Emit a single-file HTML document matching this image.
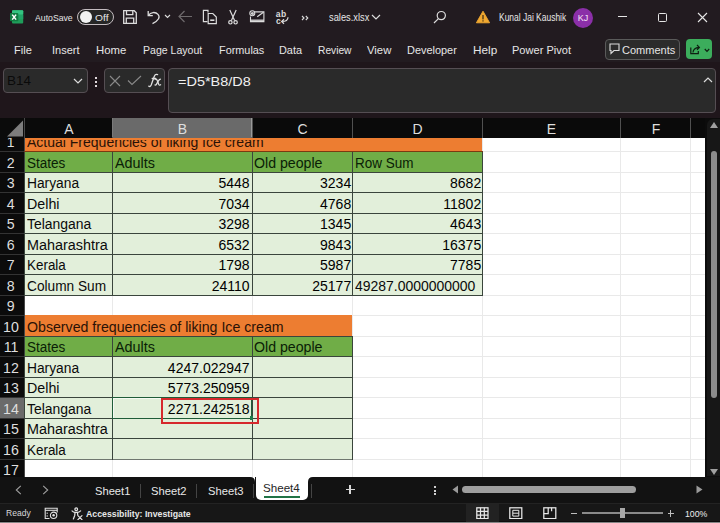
<!DOCTYPE html><html><head><meta charset="utf-8"><style>
html,body{margin:0;padding:0;}
body{width:720px;height:523px;overflow:hidden;background:#221b20;position:relative;font-family:"Liberation Sans", sans-serif;}
body div, body svg{position:absolute;}
.t{white-space:pre;line-height:1;}
</style></head><body>
<div style="left:0px;top:118px;width:705px;height:359px;background:#ffffff;"></div>
<div style="left:0px;top:118px;width:705px;height:20px;background:#0a0a0a;"></div>
<div style="left:0px;top:118px;width:24px;height:359px;background:#0b0b0b;"></div>
<div style="left:24px;top:118px;width:1px;height:359px;background:#484848;"></div>
<div style="left:112px;top:118px;width:140px;height:20px;background:#6a6a6a;"></div>
<div style="left:0px;top:397px;width:24px;height:21px;background:#6a6a6a;"></div>
<div style="left:112px;top:118px;width:1px;height:20px;background:#505050;"></div>
<div style="left:252px;top:118px;width:1px;height:20px;background:#505050;"></div>
<div style="left:352px;top:118px;width:1px;height:20px;background:#505050;"></div>
<div style="left:482px;top:118px;width:1px;height:20px;background:#505050;"></div>
<div style="left:620px;top:118px;width:1px;height:20px;background:#505050;"></div>
<div style="left:690px;top:118px;width:1px;height:20px;background:#505050;"></div>
<div style="left:251px;top:118px;width:1px;height:19px;background:#9a9a9a;"></div>
<div style="left:112px;top:118px;width:1px;height:19px;background:#7a7a7a;"></div>
<div style="left:0px;top:151px;width:24px;height:1px;background:#333333;"></div>
<div style="left:0px;top:172px;width:24px;height:1px;background:#333333;"></div>
<div style="left:0px;top:192px;width:24px;height:1px;background:#333333;"></div>
<div style="left:0px;top:213px;width:24px;height:1px;background:#333333;"></div>
<div style="left:0px;top:233px;width:24px;height:1px;background:#333333;"></div>
<div style="left:0px;top:254px;width:24px;height:1px;background:#333333;"></div>
<div style="left:0px;top:274px;width:24px;height:1px;background:#333333;"></div>
<div style="left:0px;top:295px;width:24px;height:1px;background:#333333;"></div>
<div style="left:0px;top:315px;width:24px;height:1px;background:#333333;"></div>
<div style="left:0px;top:336px;width:24px;height:1px;background:#333333;"></div>
<div style="left:0px;top:356px;width:24px;height:1px;background:#333333;"></div>
<div style="left:0px;top:377px;width:24px;height:1px;background:#333333;"></div>
<div style="left:0px;top:397px;width:24px;height:1px;background:#333333;"></div>
<div style="left:0px;top:418px;width:24px;height:1px;background:#333333;"></div>
<div style="left:0px;top:438px;width:24px;height:1px;background:#333333;"></div>
<div style="left:0px;top:459px;width:24px;height:1px;background:#333333;"></div>
<svg style="left:7px;top:120px" width="17" height="17"><polygon points="16,0.5 16,16.5 0,16.5" fill="#7d7d7d"/></svg>
<div style="left:25px;top:151px;width:680px;height:1px;background:#e9e9e9;"></div>
<div style="left:25px;top:172px;width:680px;height:1px;background:#e9e9e9;"></div>
<div style="left:25px;top:192px;width:680px;height:1px;background:#e9e9e9;"></div>
<div style="left:25px;top:213px;width:680px;height:1px;background:#e9e9e9;"></div>
<div style="left:25px;top:233px;width:680px;height:1px;background:#e9e9e9;"></div>
<div style="left:25px;top:254px;width:680px;height:1px;background:#e9e9e9;"></div>
<div style="left:25px;top:274px;width:680px;height:1px;background:#e9e9e9;"></div>
<div style="left:25px;top:295px;width:680px;height:1px;background:#e9e9e9;"></div>
<div style="left:25px;top:315px;width:680px;height:1px;background:#e9e9e9;"></div>
<div style="left:25px;top:336px;width:680px;height:1px;background:#e9e9e9;"></div>
<div style="left:25px;top:356px;width:680px;height:1px;background:#e9e9e9;"></div>
<div style="left:25px;top:377px;width:680px;height:1px;background:#e9e9e9;"></div>
<div style="left:25px;top:397px;width:680px;height:1px;background:#e9e9e9;"></div>
<div style="left:25px;top:418px;width:680px;height:1px;background:#e9e9e9;"></div>
<div style="left:25px;top:438px;width:680px;height:1px;background:#e9e9e9;"></div>
<div style="left:25px;top:459px;width:680px;height:1px;background:#e9e9e9;"></div>
<div style="left:112px;top:138px;width:1px;height:339px;background:#e9e9e9;"></div>
<div style="left:252px;top:138px;width:1px;height:339px;background:#e9e9e9;"></div>
<div style="left:352px;top:138px;width:1px;height:339px;background:#e9e9e9;"></div>
<div style="left:482px;top:138px;width:1px;height:339px;background:#e9e9e9;"></div>
<div style="left:620px;top:138px;width:1px;height:339px;background:#e9e9e9;"></div>
<div style="left:690px;top:138px;width:1px;height:339px;background:#e9e9e9;"></div>
<div style="left:25px;top:138px;width:457px;height:13px;background:#ed7d31;"></div>
<div style="left:25px;top:151px;width:457px;height:21px;background:#70ad47;"></div>
<div style="left:25px;top:172px;width:457px;height:123px;background:#e2efda;"></div>
<div style="left:25px;top:315px;width:327px;height:21px;background:#ed7d31;"></div>
<div style="left:25px;top:336px;width:327px;height:20px;background:#70ad47;"></div>
<div style="left:25px;top:356px;width:327px;height:103px;background:#e2efda;"></div>
<div style="left:24px;top:151px;width:459px;height:1px;background:#3a453c;"></div>
<div style="left:24px;top:172px;width:459px;height:1px;background:#3a453c;"></div>
<div style="left:24px;top:192px;width:459px;height:1px;background:#3a453c;"></div>
<div style="left:24px;top:213px;width:459px;height:1px;background:#3a453c;"></div>
<div style="left:24px;top:233px;width:459px;height:1px;background:#3a453c;"></div>
<div style="left:24px;top:254px;width:459px;height:1px;background:#3a453c;"></div>
<div style="left:24px;top:274px;width:459px;height:1px;background:#3a453c;"></div>
<div style="left:24px;top:295px;width:459px;height:1px;background:#3a453c;"></div>
<div style="left:24px;top:151px;width:1px;height:145px;background:#3a453c;"></div>
<div style="left:112px;top:151px;width:1px;height:145px;background:#3a453c;"></div>
<div style="left:252px;top:151px;width:1px;height:145px;background:#3a453c;"></div>
<div style="left:352px;top:151px;width:1px;height:145px;background:#3a453c;"></div>
<div style="left:482px;top:151px;width:1px;height:145px;background:#3a453c;"></div>
<div style="left:24px;top:151px;width:459px;height:1px;background:#7a3a10;"></div>
<div style="left:24px;top:336px;width:329px;height:1px;background:#3a453c;"></div>
<div style="left:24px;top:356px;width:329px;height:1px;background:#3a453c;"></div>
<div style="left:24px;top:377px;width:329px;height:1px;background:#3a453c;"></div>
<div style="left:24px;top:397px;width:329px;height:1px;background:#3a453c;"></div>
<div style="left:24px;top:418px;width:329px;height:1px;background:#3a453c;"></div>
<div style="left:24px;top:438px;width:329px;height:1px;background:#3a453c;"></div>
<div style="left:24px;top:459px;width:329px;height:1px;background:#6f776f;"></div>
<div style="left:24px;top:336px;width:1px;height:124px;background:#3a453c;"></div>
<div style="left:112px;top:336px;width:1px;height:124px;background:#3a453c;"></div>
<div style="left:252px;top:336px;width:1px;height:124px;background:#3a453c;"></div>
<div style="left:352px;top:336px;width:1px;height:124px;background:#3a453c;"></div>
<div class="t" style="left:-31.0px;width:200px;text-align:center;top:122.05px;font-size:14px;color:#dedede;font-weight:400;">A</div>
<div class="t" style="left:82.5px;width:200px;text-align:center;top:122.05px;font-size:14px;color:#dedede;font-weight:400;">B</div>
<div class="t" style="left:202.5px;width:200px;text-align:center;top:122.05px;font-size:14px;color:#dedede;font-weight:400;">C</div>
<div class="t" style="left:317.5px;width:200px;text-align:center;top:122.05px;font-size:14px;color:#dedede;font-weight:400;">D</div>
<div class="t" style="left:451.5px;width:200px;text-align:center;top:122.05px;font-size:14px;color:#dedede;font-weight:400;">E</div>
<div class="t" style="left:556.0px;width:200px;text-align:center;top:122.05px;font-size:14px;color:#dedede;font-weight:400;">F</div>
<div class="t" style="left:-89.4px;width:200px;text-align:center;top:156.08px;font-size:14.2px;color:#dedede;font-weight:400;">2</div>
<div class="t" style="left:-89.4px;width:200px;text-align:center;top:176.08px;font-size:14.2px;color:#dedede;font-weight:400;">3</div>
<div class="t" style="left:-89.4px;width:200px;text-align:center;top:197.08px;font-size:14.2px;color:#dedede;font-weight:400;">4</div>
<div class="t" style="left:-89.4px;width:200px;text-align:center;top:217.08px;font-size:14.2px;color:#dedede;font-weight:400;">5</div>
<div class="t" style="left:-89.4px;width:200px;text-align:center;top:238.08px;font-size:14.2px;color:#dedede;font-weight:400;">6</div>
<div class="t" style="left:-89.4px;width:200px;text-align:center;top:258.08px;font-size:14.2px;color:#dedede;font-weight:400;">7</div>
<div class="t" style="left:-89.4px;width:200px;text-align:center;top:279.08px;font-size:14.2px;color:#dedede;font-weight:400;">8</div>
<div class="t" style="left:-89.4px;width:200px;text-align:center;top:299.08px;font-size:14.2px;color:#dedede;font-weight:400;">9</div>
<div class="t" style="left:-89px;width:200px;text-align:center;top:320.08px;font-size:14.2px;color:#dedede;font-weight:400;">10</div>
<div class="t" style="left:-89px;width:200px;text-align:center;top:340.08px;font-size:14.2px;color:#dedede;font-weight:400;">11</div>
<div class="t" style="left:-89px;width:200px;text-align:center;top:361.08px;font-size:14.2px;color:#dedede;font-weight:400;">12</div>
<div class="t" style="left:-89px;width:200px;text-align:center;top:381.08px;font-size:14.2px;color:#dedede;font-weight:400;">13</div>
<div class="t" style="left:-89px;width:200px;text-align:center;top:402.08px;font-size:14.2px;color:#dedede;font-weight:400;">14</div>
<div class="t" style="left:-89px;width:200px;text-align:center;top:422.08px;font-size:14.2px;color:#dedede;font-weight:400;">15</div>
<div class="t" style="left:-89px;width:200px;text-align:center;top:443.08px;font-size:14.2px;color:#dedede;font-weight:400;">16</div>
<div class="t" style="left:-89px;width:200px;text-align:center;top:463.08px;font-size:14.2px;color:#dedede;font-weight:400;">17</div>
<div style="left:0;top:138px;width:24px;height:13px;overflow:hidden;">
<div class="t" style="left:-89.4px;width:200px;text-align:center;top:-2.27px;font-size:13.9px;color:#dedede;font-weight:400;">1</div>
</div>
<div style="left:25px;top:140px;width:457px;height:11px;overflow:hidden;">
<div class="t" style="left:2.2px;top:-4.85px;font-size:14px;color:#2a1206;font-weight:400;transform:scaleX(1.0002);transform-origin:left 0;">Actual Frequencies of liking Ice cream</div>
</div>
<div class="t" style="left:27.0px;top:155.65px;font-size:14px;color:#0a2006;font-weight:400;transform:scaleX(0.9647);transform-origin:left 0;">States</div>
<div class="t" style="left:115.2px;top:155.65px;font-size:14px;color:#0a2006;font-weight:400;transform:scaleX(1.0251);transform-origin:left 0;">Adults</div>
<div class="t" style="left:253.7px;top:155.65px;font-size:14px;color:#0a2006;font-weight:400;transform:scaleX(1.0115);transform-origin:left 0;">Old people</div>
<div class="t" style="left:354.7px;top:155.65px;font-size:14px;color:#0a2006;font-weight:400;transform:scaleX(0.9640);transform-origin:left 0;">Row Sum</div>
<div class="t" style="left:27.0px;top:175.65px;font-size:14px;color:#0a0a0a;font-weight:400;transform:scaleX(0.9845);transform-origin:left 0;">Haryana</div>
<div class="t" style="right:470.4px;top:175.65px;font-size:14px;color:#000;font-weight:400;">5448</div>
<div class="t" style="right:368.8px;top:175.65px;font-size:14px;color:#000;font-weight:400;">3234</div>
<div class="t" style="right:238.8px;top:175.65px;font-size:14px;color:#000;font-weight:400;">8682</div>
<div class="t" style="left:27.0px;top:196.65px;font-size:14px;color:#0a0a0a;font-weight:400;transform:scaleX(1.0186);transform-origin:left 0;">Delhi</div>
<div class="t" style="right:470.4px;top:196.65px;font-size:14px;color:#000;font-weight:400;">7034</div>
<div class="t" style="right:368.8px;top:196.65px;font-size:14px;color:#000;font-weight:400;">4768</div>
<div class="t" style="right:238.8px;top:196.65px;font-size:14px;color:#000;font-weight:400;">11802</div>
<div class="t" style="left:27.0px;top:216.65px;font-size:14px;color:#0a0a0a;font-weight:400;transform:scaleX(0.9950);transform-origin:left 0;">Telangana</div>
<div class="t" style="right:470.4px;top:216.65px;font-size:14px;color:#000;font-weight:400;">3298</div>
<div class="t" style="right:368.8px;top:216.65px;font-size:14px;color:#000;font-weight:400;">1345</div>
<div class="t" style="right:238.8px;top:216.65px;font-size:14px;color:#000;font-weight:400;">4643</div>
<div class="t" style="left:27.0px;top:237.65px;font-size:14px;color:#0a0a0a;font-weight:400;transform:scaleX(1.0281);transform-origin:left 0;">Maharashtra</div>
<div class="t" style="right:470.4px;top:237.65px;font-size:14px;color:#000;font-weight:400;">6532</div>
<div class="t" style="right:368.8px;top:237.65px;font-size:14px;color:#000;font-weight:400;">9843</div>
<div class="t" style="right:238.8px;top:237.65px;font-size:14px;color:#000;font-weight:400;">16375</div>
<div class="t" style="left:27.0px;top:257.65px;font-size:14px;color:#0a0a0a;font-weight:400;transform:scaleX(0.9588);transform-origin:left 0;">Kerala</div>
<div class="t" style="right:470.4px;top:257.65px;font-size:14px;color:#000;font-weight:400;">1798</div>
<div class="t" style="right:368.8px;top:257.65px;font-size:14px;color:#000;font-weight:400;">5987</div>
<div class="t" style="right:238.8px;top:257.65px;font-size:14px;color:#000;font-weight:400;">7785</div>
<div class="t" style="left:27.0px;top:278.65px;font-size:14px;color:#0a0a0a;font-weight:400;transform:scaleX(0.9775);transform-origin:left 0;">Column Sum</div>
<div class="t" style="right:470.4px;top:278.65px;font-size:14px;color:#000;font-weight:400;">24110</div>
<div class="t" style="right:368.8px;top:278.65px;font-size:14px;color:#000;font-weight:400;">25177</div>
<div class="t" style="left:355.09999999999997px;top:278.65px;font-size:14px;color:#0a0a0a;font-weight:400;transform:scaleX(0.9976);transform-origin:left 0;">49287.0000000000</div>
<div class="t" style="left:26.7px;top:319.65px;font-size:14px;color:#2a1206;font-weight:400;transform:scaleX(1.0115);transform-origin:left 0;">Observed frequencies of liking Ice cream</div>
<div class="t" style="left:27.0px;top:339.65px;font-size:14px;color:#0a2006;font-weight:400;transform:scaleX(0.9647);transform-origin:left 0;">States</div>
<div class="t" style="left:115.2px;top:339.65px;font-size:14px;color:#0a2006;font-weight:400;transform:scaleX(1.0251);transform-origin:left 0;">Adults</div>
<div class="t" style="left:253.7px;top:339.65px;font-size:14px;color:#0a2006;font-weight:400;transform:scaleX(1.0115);transform-origin:left 0;">Old people</div>
<div class="t" style="left:27.0px;top:360.65px;font-size:14px;color:#0a0a0a;font-weight:400;transform:scaleX(0.9845);transform-origin:left 0;">Haryana</div>
<div class="t" style="left:27.0px;top:380.65px;font-size:14px;color:#0a0a0a;font-weight:400;transform:scaleX(1.0186);transform-origin:left 0;">Delhi</div>
<div class="t" style="left:27.0px;top:401.65px;font-size:14px;color:#0a0a0a;font-weight:400;transform:scaleX(0.9950);transform-origin:left 0;">Telangana</div>
<div class="t" style="left:27.0px;top:421.65px;font-size:14px;color:#0a0a0a;font-weight:400;transform:scaleX(1.0281);transform-origin:left 0;">Maharashtra</div>
<div class="t" style="left:27.0px;top:442.65px;font-size:14px;color:#0a0a0a;font-weight:400;transform:scaleX(0.9588);transform-origin:left 0;">Kerala</div>
<div class="t" style="right:470.4px;top:360.65px;font-size:14px;color:#000;font-weight:400;">4247.022947</div>
<div class="t" style="right:470.4px;top:380.65px;font-size:14px;color:#000;font-weight:400;">5773.250959</div>
<div class="t" style="right:470.4px;top:401.65px;font-size:14px;color:#000;font-weight:400;">2271.242518</div>
<div style="left:112px;top:397px;width:140px;height:1px;background:#1f5c38;"></div>
<div style="left:112px;top:418px;width:140px;height:1px;background:#1f5c38;"></div>
<div style="left:112px;top:397px;width:1px;height:22px;background:#1f5c38;"></div>
<div style="left:251px;top:397px;width:1px;height:22px;background:#1f5c38;"></div>
<div style="left:113px;top:398px;width:138px;height:1px;background:#f4faf2;"></div>
<div style="left:113px;top:398px;width:1px;height:20px;background:#f4faf2;"></div>
<div style="left:249.5px;top:416px;width:3.5px;height:3.5px;background:#1e7a4a;"></div>
<div style="left:161.3px;top:398.4px;width:93.3px;height:21.5px;border:2.8px solid #d6282c;"></div>
<div style="left:705px;top:118px;width:15px;height:359px;background:#0c0c0c;"></div>
<div style="left:706.5px;top:119px;width:14px;height:357px;background:#171717;border-radius:6px 0 0 0;"></div>
<svg style="left:709px;top:121px" width="10" height="8"><polygon points="5,1 9,7 1,7" fill="#a0a0a0"/></svg>
<div style="left:711px;top:151px;width:6px;height:247px;background:#8c8c8c;border-radius:3px;"></div>
<svg style="left:709px;top:468px" width="10" height="8"><polygon points="1,1 9,1 5,7" fill="#a0a0a0"/></svg>
<div style="left:0px;top:477px;width:720px;height:26px;background:#121212;"></div>
<div style="left:0px;top:503px;width:720px;height:20px;background:#171717;"></div>
<div style="left:0px;top:503px;width:720px;height:1px;background:#232323;"></div>
<div style="left:0px;top:521px;width:720px;height:1px;background:#0c0c0c;"></div>
<div style="left:0px;top:522px;width:720px;height:1px;background:#858585;"></div>
<svg style="left:9px;top:9px" width="16" height="16" viewBox="0 0 16 16"><rect x="3" y="1.3" width="11.2" height="13.2" rx="1" fill="#1f9d5a"/><rect x="3" y="1.3" width="11.2" height="4.4" rx="1" fill="#33c481"/><rect x="8" y="5.7" width="6.2" height="4.4" fill="#21a366"/><rect x="1" y="3.9" width="8.3" height="8.4" rx="0.8" fill="#107c41"/><path d="M3.2 5.6 L7.1 10.6 M7.1 5.6 L3.2 10.6" stroke="#fff" stroke-width="1.5"/></svg>
<div class="t" style="left:35.3px;top:12.87px;font-size:9.6px;color:#e6e6e6;font-weight:400;transform:scaleX(0.9060);transform-origin:left 0;">AutoSave</div>
<div style="left:77px;top:8.8px;width:34.6px;height:14.4px;border:1.3px solid #c4bcc0;border-radius:9px;background:#262626;"></div>
<div style="left:80px;top:11px;width:12px;height:12px;border-radius:6px;background:#f2f2f2;"></div>
<div class="t" style="left:95px;top:12.70px;font-size:9.8px;color:#e6e6e6;font-weight:400;transform:scaleX(1.0473);transform-origin:left 0;">Off</div>
<svg style="left:122px;top:9px" width="16" height="16" viewBox="0 0 16 16" fill="none" stroke="#dcdcdc" stroke-width="1.3"><path d="M1.7 1.7 H12.2 L14.3 3.8 V14.3 H1.7 Z"/><path d="M4.5 1.7 V5.6 H10.8 V1.7"/><path d="M4.3 14.3 V9.2 H11.7 V14.3"/></svg>
<svg style="left:146px;top:9px" width="16" height="16" viewBox="0 0 16 16" fill="none" stroke="#dcdcdc" stroke-width="1.3"><path d="M2.2 2 V6.6 H6.8"/><path d="M2.5 6.4 C4.5 3 9.5 2.5 12 5.4 C14.3 8 13 11.5 6.5 14.6"/></svg>
<svg style="left:164px;top:14px" width="7" height="5" viewBox="0 0 7 5" fill="none" stroke="#dcdcdc" stroke-width="1.1"><path d="M1 1 L3.5 3.5 L6 1"/></svg>
<svg style="left:178px;top:10px" width="15" height="13" viewBox="0 0 15 13" fill="none" stroke="#6e6a6c" stroke-width="1.2"><path d="M1 6.5 H14 M6.5 1 L1 6.5 L6.5 12"/></svg>
<svg style="left:202px;top:9px" width="16" height="16" viewBox="0 0 16 16" fill="none" stroke="#dcdcdc" stroke-width="1.2"><path d="M6 3.5 V1.4 H1.4 V12.6 H5.5"/><path d="M6.2 4.5 H10.8 L14.3 8 V14.6 H6.2 Z"/><path d="M8.2 11.2 H12.4" stroke-width="1.6"/></svg>
<svg style="left:227px;top:9px" width="12" height="16" viewBox="0 0 12 16" fill="none" stroke="#dcdcdc" stroke-width="1.2"><path d="M2.8 1 L7.6 11.5 M9.2 1 L4.4 11.5"/><circle cx="3.4" cy="13.3" r="1.7"/><circle cx="8.6" cy="13.3" r="1.7"/></svg>
<svg style="left:248px;top:9px" width="18" height="15" viewBox="0 0 18 15" fill="none" stroke="#dcdcdc" stroke-width="1.1"><path d="M6.4 2.9 H15.9 V12.6 H2.5 V7.5"/><path d="M2.5 11.2 H15.9" stroke-width="1.3"/><path d="M9.2 7.8 L15.5 3.2"/><circle cx="4.3" cy="4.3" r="2.5"/><path d="M5 3.2 V5.3 Q5 5.9 5.6 5.9"/><circle cx="4.2" cy="4.5" r="0.8"/></svg>
<div class="t" style="left:275.8px;top:10.2px;font-size:8.6px;color:#dcdcdc;letter-spacing:0.3px;font-weight:700;">ab</div>
<div class="t" style="left:276px;top:16.6px;font-size:8.6px;color:#dcdcdc;font-weight:700;">c</div>
<svg style="left:280px;top:16px" width="10" height="9" viewBox="0 0 10 9" fill="none" stroke="#dcdcdc" stroke-width="1.2"><path d="M8 1.3 Q8 5.5 2 5.5 M4 3.3 L1.6 5.5 L4 7.8"/></svg>
<svg style="left:301px;top:14.5px" width="8" height="6" viewBox="0 0 8 6" fill="none" stroke="#dcdcdc" stroke-width="1.1"><path d="M1 1 L3 3 L1 5 M4.8 1 L6.8 3 L4.8 5"/></svg>
<div class="t" style="left:329px;top:12.84px;font-size:10px;color:#e6e6e6;font-weight:400;transform:scaleX(0.9294);transform-origin:left 0;">sales.xlsx</div>
<svg style="left:371px;top:14px" width="10" height="7" viewBox="0 0 10 7" fill="none" stroke="#dcdcdc" stroke-width="1.2"><path d="M1 1 L5 5 L9 1"/></svg>
<svg style="left:433px;top:10px" width="14" height="14" viewBox="0 0 14 14" fill="none" stroke="#dcdcdc" stroke-width="1.2"><circle cx="8.3" cy="5.6" r="4.1"/><path d="M5.4 8.6 L1 13"/></svg>
<svg style="left:475px;top:10px" width="16" height="14" viewBox="0 0 16 14"><path d="M8 1.2 L14.6 12.8 H1.4 Z" fill="#f0a830" stroke="#f0a830" stroke-width="0.9" stroke-linejoin="round"/><rect x="7.4" y="5" width="1.2" height="4.4" fill="#3a2a10"/><rect x="7.4" y="10.3" width="1.2" height="1.2" fill="#3a2a10"/></svg>
<div class="t" style="left:499px;top:13.04px;font-size:10px;color:#e6e6e6;font-weight:400;transform:scaleX(0.8453);transform-origin:left 0;">Kunal Jai Kaushik</div>
<div style="left:573px;top:8px;width:20px;height:20px;border-radius:10px;background:#8b2fa8;"></div>
<div class="t" style="left:483px;width:200px;text-align:center;top:13.68px;font-size:9px;color:#f4e4f4;font-weight:400;">KJ</div>
<div style="left:618px;top:16px;width:9px;height:1.2px;background:#e6e6e6;"></div>
<div style="left:658px;top:13px;width:7px;height:7px;border:1.2px solid #e6e6e6;border-radius:1.5px;"></div>
<svg style="left:697px;top:12px" width="11" height="11" viewBox="0 0 11 11" fill="none" stroke="#e6e6e6" stroke-width="1.1"><path d="M1 1 L10 10 M10 1 L1 10"/></svg>
<div class="t" style="left:13.6px;top:45.19px;font-size:11px;color:#e6e6e6;font-weight:400;transform:scaleX(1.0037);transform-origin:left 0;">File</div>
<div class="t" style="left:52.1px;top:45.19px;font-size:11px;color:#e6e6e6;font-weight:400;transform:scaleX(0.9994);transform-origin:left 0;">Insert</div>
<div class="t" style="left:96.1px;top:45.19px;font-size:11px;color:#e6e6e6;font-weight:400;transform:scaleX(1.0326);transform-origin:left 0;">Home</div>
<div class="t" style="left:142.9px;top:45.19px;font-size:11px;color:#e6e6e6;font-weight:400;transform:scaleX(0.9582);transform-origin:left 0;">Page Layout</div>
<div class="t" style="left:218.6px;top:45.19px;font-size:11px;color:#e6e6e6;font-weight:400;transform:scaleX(0.9881);transform-origin:left 0;">Formulas</div>
<div class="t" style="left:279.1px;top:45.19px;font-size:11px;color:#e6e6e6;font-weight:400;transform:scaleX(0.9892);transform-origin:left 0;">Data</div>
<div class="t" style="left:317.90000000000003px;top:45.19px;font-size:11px;color:#e6e6e6;font-weight:400;transform:scaleX(0.9285);transform-origin:left 0;">Review</div>
<div class="t" style="left:367.1px;top:45.19px;font-size:11px;color:#e6e6e6;font-weight:400;transform:scaleX(1.0272);transform-origin:left 0;">View</div>
<div class="t" style="left:406.6px;top:45.19px;font-size:11px;color:#e6e6e6;font-weight:400;transform:scaleX(0.9932);transform-origin:left 0;">Developer</div>
<div class="t" style="left:472.90000000000003px;top:45.19px;font-size:11px;color:#e6e6e6;font-weight:400;transform:scaleX(1.0696);transform-origin:left 0;">Help</div>
<div class="t" style="left:512.1px;top:45.19px;font-size:11px;color:#e6e6e6;font-weight:400;transform:scaleX(1.0051);transform-origin:left 0;">Power Pivot</div>
<div style="left:605px;top:39px;width:73px;height:19px;border:1px solid #5a5a5a;border-radius:4px;background:#2b2b2b;"></div>
<svg style="left:609px;top:43px" width="11" height="12" viewBox="0 0 11 12" fill="none" stroke="#dcdcdc" stroke-width="1.1"><path d="M1 1 H10 V7.5 H5 L2 10.5 V7.5 H1 Z"/></svg>
<div class="t" style="left:621.6px;top:45.19px;font-size:11px;color:#e6e6e6;font-weight:400;transform:scaleX(1.0021);transform-origin:left 0;">Comments</div>
<div style="left:686px;top:39px;width:26px;height:20px;border-radius:4px;background:#3cad5c;"></div>
<svg style="left:689px;top:43px" width="13" height="13" viewBox="0 0 13 13" fill="none" stroke="#0f1f12" stroke-width="1.2"><path d="M1.8 4.5 V10.7 H9.3 V8"/><path d="M4 9.5 Q4.2 5 10.2 4.4 M8 2 L10.4 4.4 L8 6.8"/></svg>
<svg style="left:704px;top:47.5px" width="6" height="5" viewBox="0 0 6 5" fill="none" stroke="#0f1f12" stroke-width="1.2"><path d="M0.8 1 L3 3.3 L5.2 1"/></svg>
<div style="left:0px;top:62px;width:720px;height:56px;background:#1f161b;"></div>
<div style="left:3px;top:68px;width:83px;height:23px;border:1px solid #554e53;border-radius:4px;background:#2a2a2a;"></div>
<div class="t" style="left:7px;top:74.14px;font-size:13.3px;color:#0a0a0a;font-weight:400;transform:scaleX(1.0139);transform-origin:left 0;">B14</div>
<svg style="left:73px;top:78px" width="10" height="7" viewBox="0 0 10 7" fill="none" stroke="#dcdcdc" stroke-width="1.2"><path d="M1 1 L5 5 L9 1"/></svg>
<div style="left:95px;top:76.5px;width:2px;height:2px;background:#e0d8dc;"></div>
<div style="left:95px;top:80.5px;width:2px;height:2px;background:#e0d8dc;"></div>
<div style="left:95px;top:84.5px;width:2px;height:2px;background:#e0d8dc;"></div>
<div style="left:104px;top:68px;width:59px;height:23px;border:1px solid #554e53;border-radius:4px;background:#2a2a2a;"></div>
<svg style="left:109px;top:75px" width="12" height="12" viewBox="0 0 12 12" fill="none" stroke="#8a8a8a" stroke-width="1.1"><path d="M1 1 L11 11 M11 1 L1 11"/></svg>
<svg style="left:127px;top:75px" width="15" height="11" viewBox="0 0 15 11" fill="none" stroke="#8a8a8a" stroke-width="1.1"><path d="M1 5.5 L5 9.5 L14 1"/></svg>
<svg style="left:146px;top:72px" width="17" height="17" viewBox="0 0 17 17" fill="none" stroke="#e0e0e0" stroke-width="1.3" stroke-linecap="round"><path d="M2.8 14.2 Q4.2 15.2 5.2 13 L8.3 4.2 Q9.3 1.8 11.6 2.6"/><path d="M6.2 6.5 H9.6"/><path d="M9.2 7.3 Q10.3 6.6 11 8 L12.8 12.5 Q13.5 13.6 14.6 12.8"/><path d="M14.4 7.2 Q13.5 7.2 12.2 9.2 L10.4 12.3 Q9.8 13.2 9 12.9"/></svg>
<div style="left:168px;top:68px;width:546px;height:43px;border:1px solid #554e53;border-radius:4px;background:#2a2a2a;"></div>
<div class="t" style="left:177.7px;top:76.27px;font-size:12.2px;color:#f0f0f0;font-weight:400;transform:scaleX(1.1874);transform-origin:left 0;">=D5*B8/D8</div>
<svg style="left:703px;top:76px" width="10" height="7" viewBox="0 0 10 7" fill="none" stroke="#dcdcdc" stroke-width="1.2"><path d="M1 6 L5 2 L9 6"/></svg>
<svg style="left:15px;top:485px" width="7" height="10" viewBox="0 0 7 10" fill="none" stroke="#a0a0a0" stroke-width="1.1"><path d="M5.8 0.8 L1.3 5 L5.8 9.2"/></svg>
<svg style="left:42px;top:485px" width="7" height="10" viewBox="0 0 7 10" fill="none" stroke="#a0a0a0" stroke-width="1.1"><path d="M1.2 0.8 L5.7 5 L1.2 9.2"/></svg>
<div class="t" style="left:95.3px;top:485.57px;font-size:11.5px;color:#e8e8e8;font-weight:400;transform:scaleX(0.9711);transform-origin:left 0;">Sheet1</div>
<div style="left:139.5px;top:484px;width:1px;height:14px;background:#444;"></div>
<div class="t" style="left:150.8px;top:485.57px;font-size:11.5px;color:#e8e8e8;font-weight:400;transform:scaleX(0.9739);transform-origin:left 0;">Sheet2</div>
<div style="left:196px;top:484px;width:1px;height:14px;background:#444;"></div>
<div class="t" style="left:207.5px;top:485.57px;font-size:11.5px;color:#e8e8e8;font-weight:400;transform:scaleX(0.9739);transform-origin:left 0;">Sheet3</div>
<div style="left:255.5px;top:477px;width:52px;height:23px;background:#ffffff;border-radius:0 0 5px 5px;"></div>
<svg style="left:250px;top:477px" width="5" height="5" viewBox="0 0 5 5"><path d="M0 0 H5 V5 Q5 0 0 0 Z" fill="#ffffff"/></svg>
<svg style="left:308px;top:477px" width="5" height="5" viewBox="0 0 5 5"><path d="M0 0 H5 Q0 0 0 5 Z" fill="#ffffff"/></svg>
<div class="t" style="left:263px;top:483.47px;font-size:11.5px;color:#262626;font-weight:400;transform:scaleX(1.0095);transform-origin:left 0;">Sheet4</div>
<div style="left:263.5px;top:496.3px;width:36.5px;height:1.8px;background:#217346;"></div>
<div style="left:310.5px;top:484px;width:1px;height:14px;background:#444;"></div>
<div style="left:252.5px;top:484px;width:1px;height:14px;background:#444;"></div>
<div style="left:345.5px;top:489.3px;width:9px;height:1.2px;background:#d8d8d8;"></div>
<div style="left:349.4px;top:485.3px;width:1.2px;height:9px;background:#d8d8d8;"></div>
<div style="left:434px;top:486px;width:2px;height:2px;background:#d0d0d0;"></div>
<div style="left:434px;top:489.5px;width:2px;height:2px;background:#d0d0d0;"></div>
<div style="left:434px;top:493px;width:2px;height:2px;background:#d0d0d0;"></div>
<svg style="left:452px;top:485px" width="7" height="9" viewBox="0 0 7 9"><path d="M6 0.5 V8.5 L0.5 4.5 Z" fill="#9a9a9a"/></svg>
<div style="left:462px;top:486px;width:174px;height:7px;border-radius:4px;background:#9e9e9e;"></div>
<svg style="left:696px;top:485px" width="7" height="9" viewBox="0 0 7 9"><path d="M0.5 0.5 V8.5 L6.5 4.5 Z" fill="#9a9a9a"/></svg>
<div class="t" style="left:6.3px;top:508.36px;font-size:9.5px;color:#d8d8d8;font-weight:400;transform:scaleX(0.8992);transform-origin:left 0;">Ready</div>
<svg style="left:44px;top:507px" width="15" height="13" viewBox="0 0 15 13" fill="none" stroke="#e0e0e0" stroke-width="1.1"><path d="M5.5 11.5 H1.2 V1.2 H13.2 V5.5"/><path d="M1.2 3.3 H13.2"/><rect x="2.6" y="5.6" width="1.2" height="1.2" fill="#e0e0e0" stroke="none"/><rect x="2.6" y="8.4" width="1.2" height="1.2" fill="#e0e0e0" stroke="none"/><circle cx="9.6" cy="8.3" r="3.2" fill="#171717"/><circle cx="9.6" cy="8.3" r="1.2" fill="#e0e0e0" stroke="none"/></svg>
<svg style="left:70.8px;top:506.8px" width="13" height="13.5" viewBox="0 0 15 16" fill="none" stroke="#e4e4e4" stroke-width="1.45" stroke-linecap="round" stroke-linejoin="round"><circle cx="6" cy="2.6" r="1.6"/><path d="M1 4.6 Q3 6.6 4.6 6.4 L4.2 10 L2.6 14.2 M11.2 4.6 Q9 6.6 7.4 6.4 L7.8 9.3"/><path d="M4.6 6.4 H7.4"/><path d="M8 10.2 L12.8 15 M12.8 10.2 L8 15"/></svg>
<div class="t" style="left:86.3px;top:509.26px;font-size:9.5px;color:#e8e8e8;font-weight:700;transform:scaleX(0.9222);transform-origin:left 0;">Accessibility: Investigate</div>
<div style="left:466px;top:504px;width:33px;height:18px;background:#222222;"></div>
<svg style="left:476px;top:506.5px" width="13" height="12.5" viewBox="0 0 13 12.5" fill="none" stroke="#e8e8e8" stroke-width="1.25"><rect x="0.8" y="0.8" width="11.2" height="10.8"/><path d="M0.8 4.4 H12 M0.8 8 H12 M4.5 0.8 V11.6 M8.3 0.8 V11.6"/></svg>
<svg style="left:509px;top:506.5px" width="14" height="12.5" viewBox="0 0 14 12.5" fill="none" stroke="#e8e8e8" stroke-width="1.25"><rect x="0.8" y="0.8" width="12" height="10.8"/><path d="M3.8 3.3 V9.1 M9.8 3.3 V9.1 M3.8 3.3 H9.8 M3.8 9.1 H9.8 M3.8 6.2 H9.8" stroke-width="1"/></svg>
<svg style="left:542.5px;top:506.5px" width="14" height="12.5" viewBox="0 0 14 12.5" fill="none" stroke="#e8e8e8" stroke-width="1.25"><rect x="0.8" y="0.8" width="12" height="10.8"/><path d="M5.2 0.8 V6.6 H0.8 M8.6 0.8 V4.2"/></svg>
<div style="left:570.5px;top:513px;width:6.5px;height:1.1px;background:#bdbdbd;"></div>
<div style="left:582px;top:512.3px;width:81px;height:2px;background:#8a8a8a;"></div>
<div style="left:620px;top:507.5px;width:5px;height:10.5px;background:#a8a8a8;"></div>
<div style="left:667.8px;top:513px;width:6px;height:1.1px;background:#bdbdbd;"></div>
<div style="left:670.3px;top:510px;width:1.1px;height:7px;background:#bdbdbd;"></div>
<div class="t" style="left:685px;top:509.00px;font-size:9.8px;color:#ececec;font-weight:400;transform:scaleX(0.8938);transform-origin:left 0;">100%</div>
</body></html>
